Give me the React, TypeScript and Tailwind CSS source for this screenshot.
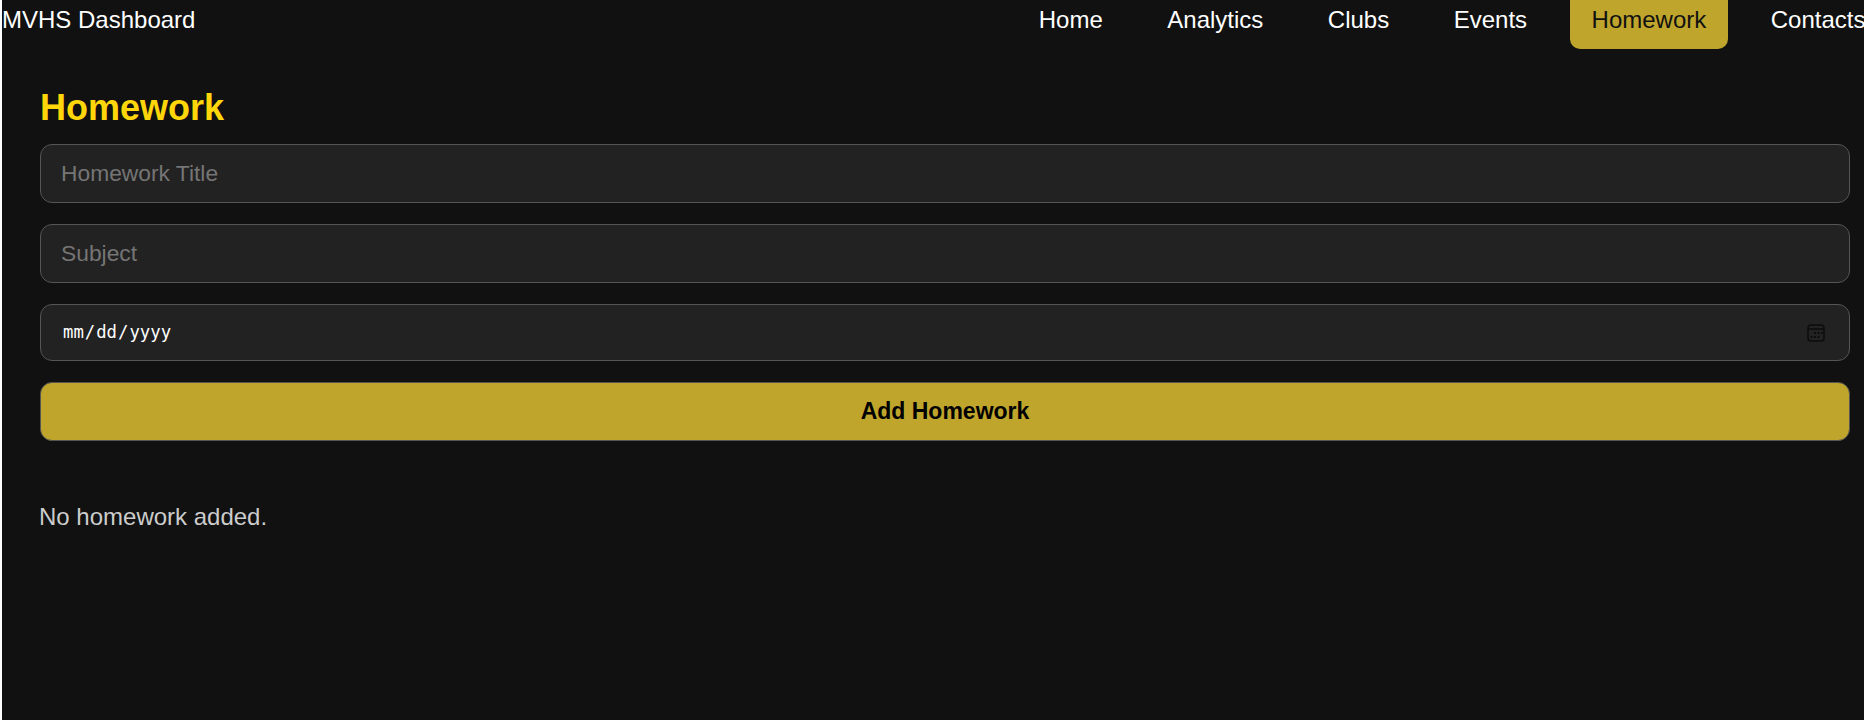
const links = ['Home', 'Analytics', 'Clubs', 'Events', 'Homework', 'Contacts'];

function CalendarIcon() {
  return (
    <svg
      width="18"
      height="18"
      viewBox="0 0 18 18"
      fill="none"
      className="pointer-events-none absolute top-[20px] right-[25px]"
    >
      <rect x="1" y="1" width="16" height="16" rx="3" stroke="#0c0c0c" strokeWidth="1.5" />
      <path d="M1 5h16" stroke="#0c0c0c" strokeWidth="1.5" />
      <g fill="#0c0c0c">
        <rect x="7" y="8" width="2" height="2" />
        <rect x="10.5" y="8" width="2" height="2" />
        <rect x="14" y="8" width="1.6" height="2" />
        <rect x="3.5" y="12" width="2" height="2" />
        <rect x="7" y="12" width="2" height="2" />
        <rect x="10.5" y="12" width="2" height="2" />
      </g>
    </svg>
  );
}

function App() {
  return (
    <div className="w-[1864px] overflow-hidden bg-white pl-[2px] font-['Liberation_Sans',Arial,sans-serif]">
      <div className="h-[720px] w-[1886px] bg-[#111111] text-white">
        <nav className="flex h-[49px] items-start justify-between">
          <div className="pt-[6px] text-[24px] leading-[28px]">MVHS Dashboard</div>
          <ul className="mr-[1px] flex gap-[21.5px]">
            {links.map((link) => (
              <li key={link}>
                <a
                  className={`block h-[49px] rounded-b-[10px] px-[21.5px] pt-[6px] text-[24px] leading-[28px] ${
                    link === 'Homework' ? 'bg-[#bfa52b] text-[#111111]' : 'text-white'
                  }`}
                >
                  {link}
                </a>
              </li>
            ))}
          </ul>
        </nav>
        <main className="px-[38px] pt-[38px]">
          <h1 className="mb-[15px] text-[36px] leading-[42px] font-bold text-[#ffd60a]">Homework</h1>
          <form className="flex flex-col gap-[21px]">
            <input
              type="text"
              placeholder="Homework Title"
              className="h-[59px] w-full rounded-[12px] border border-[#555555] bg-[#222222] px-[20px] text-[22.8px] text-white placeholder:text-[#757575]"
            />
            <input
              type="text"
              placeholder="Subject"
              className="h-[59px] w-full rounded-[12px] border border-[#555555] bg-[#222222] px-[20px] text-[22.8px] text-white placeholder:text-[#757575]"
            />
            <div className="relative">
              <input
                type="date"
                className="block h-[57px] w-full rounded-[12px] border border-[#555555] bg-[#222222] px-[21px] font-['DejaVu_Sans_Mono',monospace] text-[17.3px] text-white [&::-webkit-calendar-picker-indicator]:opacity-0"
              />
              <CalendarIcon />
            </div>
            <button
              type="button"
              className="h-[59px] w-full rounded-[12px] border border-[#555555] bg-[#bfa52b] text-[23px] font-bold text-black"
            >
              Add Homework
            </button>
          </form>
          <p className="mt-[62px] -ml-px text-[24px] leading-[28px] text-[#cccccc]">No homework added.</p>
        </main>
      </div>
    </div>
  );
}

export default App;
